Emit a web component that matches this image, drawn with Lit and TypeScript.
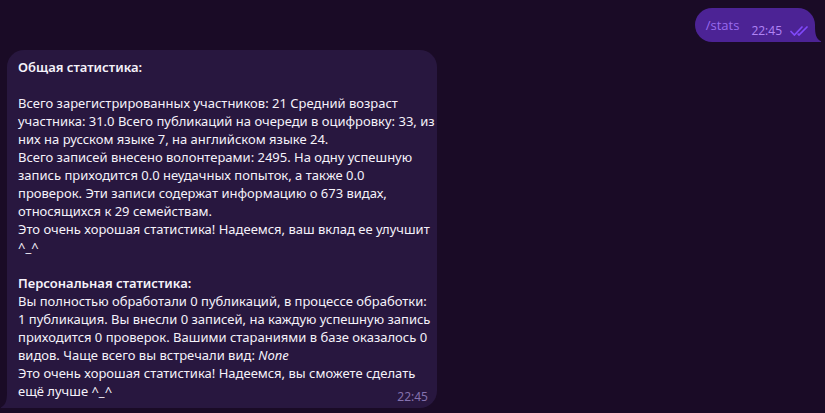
import { LitElement, html, css, svg } from "lit";
import { customElement, property } from "lit/decorators.js";

@customElement("chat-bubble")
class ChatBubble extends LitElement {
  @property({ type: Boolean, reflect: true }) out = false;
  @property() time = "";

  static styles = css`
    :host {
      display: block;
      position: relative;
      box-sizing: border-box;
      width: 100%;
      max-width: 430px;
      padding: 8px 11px;
      border-radius: 17px 17px 17px 0;
      background: #28173f;
      color: #f5f2fa;
    }
    :host([out]) {
      display: flex;
      gap: 12px;
      width: auto;
      padding-right: 7px;
      border-radius: 17px 17px 0 17px;
      background: #4c2395;
      color: #9a6bf0;
    }
    .time {
      position: absolute;
      right: 9px;
      bottom: 3px;
      font-size: 12px;
      line-height: 16px;
      color: #8572ae;
    }
    :host([out]) .meta {
      display: flex;
      align-items: center;
      gap: 8px;
      margin: 6px 0 -6px;
    }
    :host([out]) .time {
      position: static;
      color: #b184f5;
    }
    .checks {
      display: block;
      width: 18px;
      height: 10px;
    }
    .tail {
      position: absolute;
      bottom: 0;
      left: -6px;
      width: 6px;
      height: 16px;
      fill: #28173f;
    }
    :host([out]) .tail {
      left: auto;
      right: -6px;
      fill: #4c2395;
    }
  `;

  render() {
    const tail = this.out
      ? svg`<path d="M0 0C0 8 1 13 6 15.2V16H0Z"/>`
      : svg`<path d="M6 0C6 8 5 13 0 15.2V16H6Z"/>`;
    return html`
      <slot></slot>
      <div class="meta">
        <time class="time">${this.time}</time>
        ${this.out
          ? html`<svg class="checks" viewBox="0 0 18 10" fill="none" stroke="#8049fa" stroke-width="1.7" stroke-linecap="round" aria-hidden="true">
              <path d="M1 5.5L4.4 9L12 1M8.2 8.2L9 9L17 1" />
            </svg>`
          : ""}
      </div>
      <svg class="tail" viewBox="0 0 6 16" aria-hidden="true">${tail}</svg>
    `;
  }
}

@customElement("app-root")
class AppRoot extends LitElement {
  static styles = css`
    :host {
      display: flex;
      flex-direction: column;
      gap: 8px;
      box-sizing: border-box;
      min-height: 100vh;
      padding: 8px 10px 5px 7px;
      background: #1a0b26;
      font: 13px/18px "Open Sans", "Noto Sans", sans-serif;
    }
    .sent {
      align-self: flex-end;
    }
    .received {
      align-self: flex-start;
      font-family: "Noto Sans", "Open Sans", sans-serif;
    }
    p {
      width: fit-content;
      margin: 0;
      white-space: nowrap;
    }
    .gap {
      margin-bottom: 18px;
    }
    b {
      font-weight: 600;
    }
  `;

  render() {
    return html`
      <chat-bubble class="sent" out time="22:45"><span>/stats</span></chat-bubble>
      <chat-bubble class="received" time="22:45">
        <p class="gap"><b>Общая статистика:</b></p>
        <p>Всего зарегистрированных участников: 21 Средний возраст<br>участника: 31.0 Всего публикаций на очереди в оцифровку: 33, из<br>них на русском языке 7, на английском языке 24.</p>
        <p>Всего записей внесено волонтерами: 2495. На одну успешную<br>запись приходится 0.0 неудачных попыток, а также 0.0<br>проверок. Эти записи содержат информацию о 673 видах,<br>относящихся к 29 семействам.</p>
        <p class="gap">Это очень хорошая статистика! Надеемся, ваш вклад ее улучшит<br>^_^</p>
        <p><b>Персональная статистика:</b></p>
        <p>Вы полностью обработали 0 публикаций, в процессе обработки:<br>1 публикация. Вы внесли 0 записей, на каждую успешную запись<br>приходится 0 проверок. Вашими стараниями в базе оказалось 0<br>видов. Чаще всего вы встречали вид: <i>None</i></p>
        <p>Это очень хорошая статистика! Надеемся, вы сможете сделать<br>ещё лучше ^_^</p>
      </chat-bubble>
    `;
  }
}
